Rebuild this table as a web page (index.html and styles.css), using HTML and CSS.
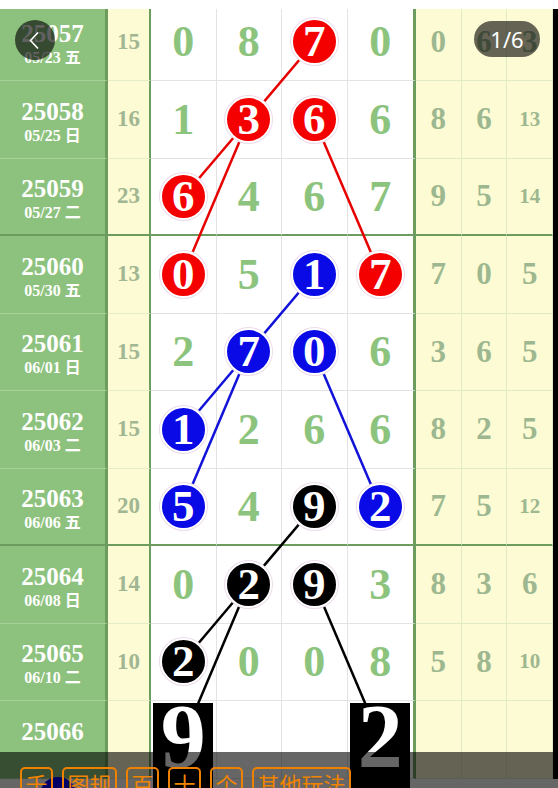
FILE: index.html
```html
<!DOCTYPE html>
<html lang="zh">
<head>
<meta charset="utf-8">
<title>走势图</title>
<link rel="stylesheet" href="styles.css">
</head>
<body>
<div class="page">
  <div class="viewport">
    <div class="table">
      <svg class="links" width="558" height="775" viewBox="0 0 558 775">
        <g stroke="#e60000" stroke-width="2.5">
          <line x1="314.25" y1="38.25" x2="248.75" y2="115.75"/>
          <line x1="248.75" y1="115.75" x2="183.25" y2="192.75"/>
          <line x1="248.75" y1="115.75" x2="183.25" y2="270.25"/>
          <line x1="314.25" y1="115.75" x2="380.25" y2="270.25"/>
        </g>
        <g stroke="#1212d8" stroke-width="2.5">
          <line x1="314.25" y1="270.25" x2="248.75" y2="347.75"/>
          <line x1="248.75" y1="347.75" x2="183.25" y2="425.25"/>
          <line x1="248.75" y1="347.75" x2="183.25" y2="502.25"/>
          <line x1="314.25" y1="347.75" x2="380.25" y2="502.25"/>
        </g>
        <g stroke="#000" stroke-width="2.5">
          <line x1="314.25" y1="502.25" x2="248.75" y2="579.75"/>
          <line x1="248.75" y1="579.75" x2="183.25" y2="657.25"/>
          <line x1="248.75" y1="579.75" x2="183.25" y2="734.75"/>
          <line x1="314.25" y1="579.75" x2="380.25" y2="734.75"/>
        </g>
      </svg>

      <div class="row">
        <div class="cell date"><b class="issue">25057</b><span class="day">05/23 五</span></div>
        <div class="cell count">15</div>
        <div class="cell num">0</div>
        <div class="cell num">8</div>
        <div class="cell num"><span class="ball red">7</span></div>
        <div class="cell num last">0</div>
        <div class="cell stat">0</div>
        <div class="cell stat">6</div>
        <div class="cell stat">3</div>
        <div class="edge"></div>
      </div>

      <div class="row">
        <div class="cell date"><b class="issue">25058</b><span class="day">05/25 日</span></div>
        <div class="cell count">16</div>
        <div class="cell num">1</div>
        <div class="cell num"><span class="ball red">3</span></div>
        <div class="cell num"><span class="ball red">6</span></div>
        <div class="cell num last">6</div>
        <div class="cell stat">8</div>
        <div class="cell stat">6</div>
        <div class="cell stat small">13</div>
        <div class="edge"></div>
      </div>

      <div class="row sep">
        <div class="cell date"><b class="issue">25059</b><span class="day">05/27 二</span></div>
        <div class="cell count">23</div>
        <div class="cell num"><span class="ball red">6</span></div>
        <div class="cell num">4</div>
        <div class="cell num">6</div>
        <div class="cell num last">7</div>
        <div class="cell stat">9</div>
        <div class="cell stat">5</div>
        <div class="cell stat small">14</div>
        <div class="edge"></div>
      </div>

      <div class="row">
        <div class="cell date"><b class="issue">25060</b><span class="day">05/30 五</span></div>
        <div class="cell count">13</div>
        <div class="cell num"><span class="ball red">0</span></div>
        <div class="cell num">5</div>
        <div class="cell num"><span class="ball blue">1</span></div>
        <div class="cell num last"><span class="ball red">7</span></div>
        <div class="cell stat">7</div>
        <div class="cell stat">0</div>
        <div class="cell stat">5</div>
        <div class="edge"></div>
      </div>

      <div class="row">
        <div class="cell date"><b class="issue">25061</b><span class="day">06/01 日</span></div>
        <div class="cell count">15</div>
        <div class="cell num">2</div>
        <div class="cell num"><span class="ball blue">7</span></div>
        <div class="cell num"><span class="ball blue">0</span></div>
        <div class="cell num last">6</div>
        <div class="cell stat">3</div>
        <div class="cell stat">6</div>
        <div class="cell stat">5</div>
        <div class="edge"></div>
      </div>

      <div class="row">
        <div class="cell date"><b class="issue">25062</b><span class="day">06/03 二</span></div>
        <div class="cell count">15</div>
        <div class="cell num"><span class="ball blue">1</span></div>
        <div class="cell num">2</div>
        <div class="cell num">6</div>
        <div class="cell num last">6</div>
        <div class="cell stat">8</div>
        <div class="cell stat">2</div>
        <div class="cell stat">5</div>
        <div class="edge"></div>
      </div>

      <div class="row sep">
        <div class="cell date"><b class="issue">25063</b><span class="day">06/06 五</span></div>
        <div class="cell count">20</div>
        <div class="cell num"><span class="ball blue">5</span></div>
        <div class="cell num">4</div>
        <div class="cell num"><span class="ball black">9</span></div>
        <div class="cell num last"><span class="ball blue">2</span></div>
        <div class="cell stat">7</div>
        <div class="cell stat">5</div>
        <div class="cell stat small">12</div>
        <div class="edge"></div>
      </div>

      <div class="row">
        <div class="cell date"><b class="issue">25064</b><span class="day">06/08 日</span></div>
        <div class="cell count">14</div>
        <div class="cell num">0</div>
        <div class="cell num"><span class="ball black">2</span></div>
        <div class="cell num"><span class="ball black">9</span></div>
        <div class="cell num last">3</div>
        <div class="cell stat">8</div>
        <div class="cell stat">3</div>
        <div class="cell stat">6</div>
        <div class="edge"></div>
      </div>

      <div class="row">
        <div class="cell date"><b class="issue">25065</b><span class="day">06/10 二</span></div>
        <div class="cell count">10</div>
        <div class="cell num"><span class="ball black">2</span></div>
        <div class="cell num">0</div>
        <div class="cell num">0</div>
        <div class="cell num last">8</div>
        <div class="cell stat">5</div>
        <div class="cell stat">8</div>
        <div class="cell stat small">10</div>
        <div class="edge"></div>
      </div>

      <div class="row">
        <div class="cell date"><b class="issue">25066</b><span class="day">&nbsp;</span></div>
        <div class="cell count"></div>
        <div class="cell num"><span class="box">9</span></div>
        <div class="cell num"></div>
        <div class="cell num"></div>
        <div class="cell num last"><span class="box">2</span></div>
        <div class="cell stat"></div>
        <div class="cell stat"></div>
        <div class="cell stat"></div>
        <div class="edge"></div>
      </div>
    </div>
  </div>

  <button class="back" aria-label="返回">
    <svg width="40" height="40" viewBox="0 0 40 40"><polyline points="23,12.5 15.5,20.5 23,28.5" fill="none" stroke="#fff" stroke-width="1.6"/></svg>
  </button>
  <div class="pager">1/6</div>

  <div class="fab"></div>
  <div class="toolbar">
    <span class="btn">千</span>
    <span class="btn">图规</span>
    <span class="btn">百</span>
    <span class="btn">十</span>
    <span class="btn">个</span>
    <span class="btn">其他玩法</span>
  </div>
</div>
</body>
</html>
```

FILE: styles.css
```css
html, body {
  margin: 0;
  padding: 0;
  background: #fff;
}

body {
  width: 558px;
  height: 788px;
  overflow: hidden;
  font-family: "Liberation Serif", "Noto Sans CJK SC", serif;
}

.page {
  position: relative;
  width: 558px;
  height: 788px;
  padding-top: 9px;
  box-sizing: border-box;
}

.viewport {
  height: 779px;
  overflow: hidden;
}

.table {
  position: relative;
  margin-top: -5.5px;
}

.links {
  position: absolute;
  left: 0;
  top: 0;
  z-index: 1;
  pointer-events: none;
}

.row {
  display: flex;
  height: 77.5px;
}

.cell {
  box-sizing: border-box;
  height: 100%;
  flex: none;
  display: flex;
  align-items: center;
  justify-content: center;
  font-weight: bold;
}

.date {
  width: 108px;
  flex-direction: column;
  padding-top: 5px;
  background: #8dc27e;
  border-right: 3px solid #6c9d5e;
  border-bottom: 1px solid #a7d297;
  color: #fff;
}

.issue {
  font-size: 25px;
  line-height: 28px;
}

.day {
  font-size: 16px;
  line-height: 20px;
  font-family: "Liberation Serif", "Noto Sans CJK SC", serif;
}

.count {
  width: 43px;
  background: #fdfbd3;
  border-right: 2px solid #6c9d5e;
  border-bottom: 1px solid #e4edc8;
  color: #a1b692;
  font-size: 23px;
}

.num {
  width: 65.5px;
  background: #fff;
  border-right: 1px solid #e3e3e3;
  border-bottom: 1px solid #e3e3e3;
  color: #8cc47e;
  font-size: 44px;
}

.num.last {
  width: 68.5px;
  border-right: 3px solid #6c9d5e;
}

.stat {
  width: 45.67px;
  background: #fdfbd3;
  border-right: 1px solid #e0eac5;
  border-bottom: 1px solid #e0eac5;
  color: #9db890;
  font-size: 31px;
}

.stat.small {
  font-size: 21px;
}

.edge {
  flex: none;
  width: 5px;
  background: #000;
}

.row.sep .cell {
  border-bottom: 2px solid #6c9d5e;
}

.ball {
  position: relative;
  z-index: 2;
  width: 43px;
  height: 43px;
  border-radius: 50%;
  border: 2px solid #fff;
  box-shadow: 0 0 0 1px #ecdcea;
  display: flex;
  align-items: center;
  justify-content: center;
  color: #fff;
  font-size: 45px;
  line-height: 1;
}

.ball.red { background: #f40000; }
.ball.blue { background: #0a0ae6; }
.ball.black { background: #000; }

.box {
  position: relative;
  z-index: 2;
  align-self: flex-start;
  margin-top: 2px;
  width: 60px;
  height: 92px;
  background: #000;
  color: #fff;
  font-size: 90px;
  line-height: 0.75;
  text-align: center;
}

.back {
  position: absolute;
  left: 15px;
  top: 20px;
  z-index: 6;
  width: 40px;
  height: 40px;
  padding: 0;
  border: none;
  border-radius: 50%;
  background: rgba(0, 0, 0, 0.62);
}

.back svg {
  display: block;
}

.pager {
  position: absolute;
  left: 474px;
  top: 21px;
  z-index: 6;
  width: 66px;
  height: 36px;
  border-radius: 18px;
  background: rgba(0, 0, 0, 0.6);
  color: #fff;
  font-family: "Noto Sans", "Roboto", sans-serif;
  font-size: 22px;
  line-height: 36px;
  text-align: center;
}

.fab {
  position: absolute;
  left: 40px;
  top: 777px;
  z-index: 4;
  width: 36px;
  height: 36px;
  border-radius: 50%;
  background: #0000ff;
}

.toolbar {
  position: absolute;
  left: 0;
  bottom: 0;
  z-index: 5;
  width: 558px;
  height: 36px;
  box-sizing: border-box;
  padding: 15px 0 0 20px;
  display: flex;
  align-items: flex-start;
  gap: 9px;
  background: rgba(0, 0, 0, 0.6);
}

.btn {
  flex: none;
  height: 32px;
  padding: 0 3.5px;
  border: 2px solid #ee8100;
  border-radius: 5px;
  color: #f08400;
  font-family: "Noto Sans CJK SC", sans-serif;
  font-size: 22px;
  line-height: 28px;
}
```
